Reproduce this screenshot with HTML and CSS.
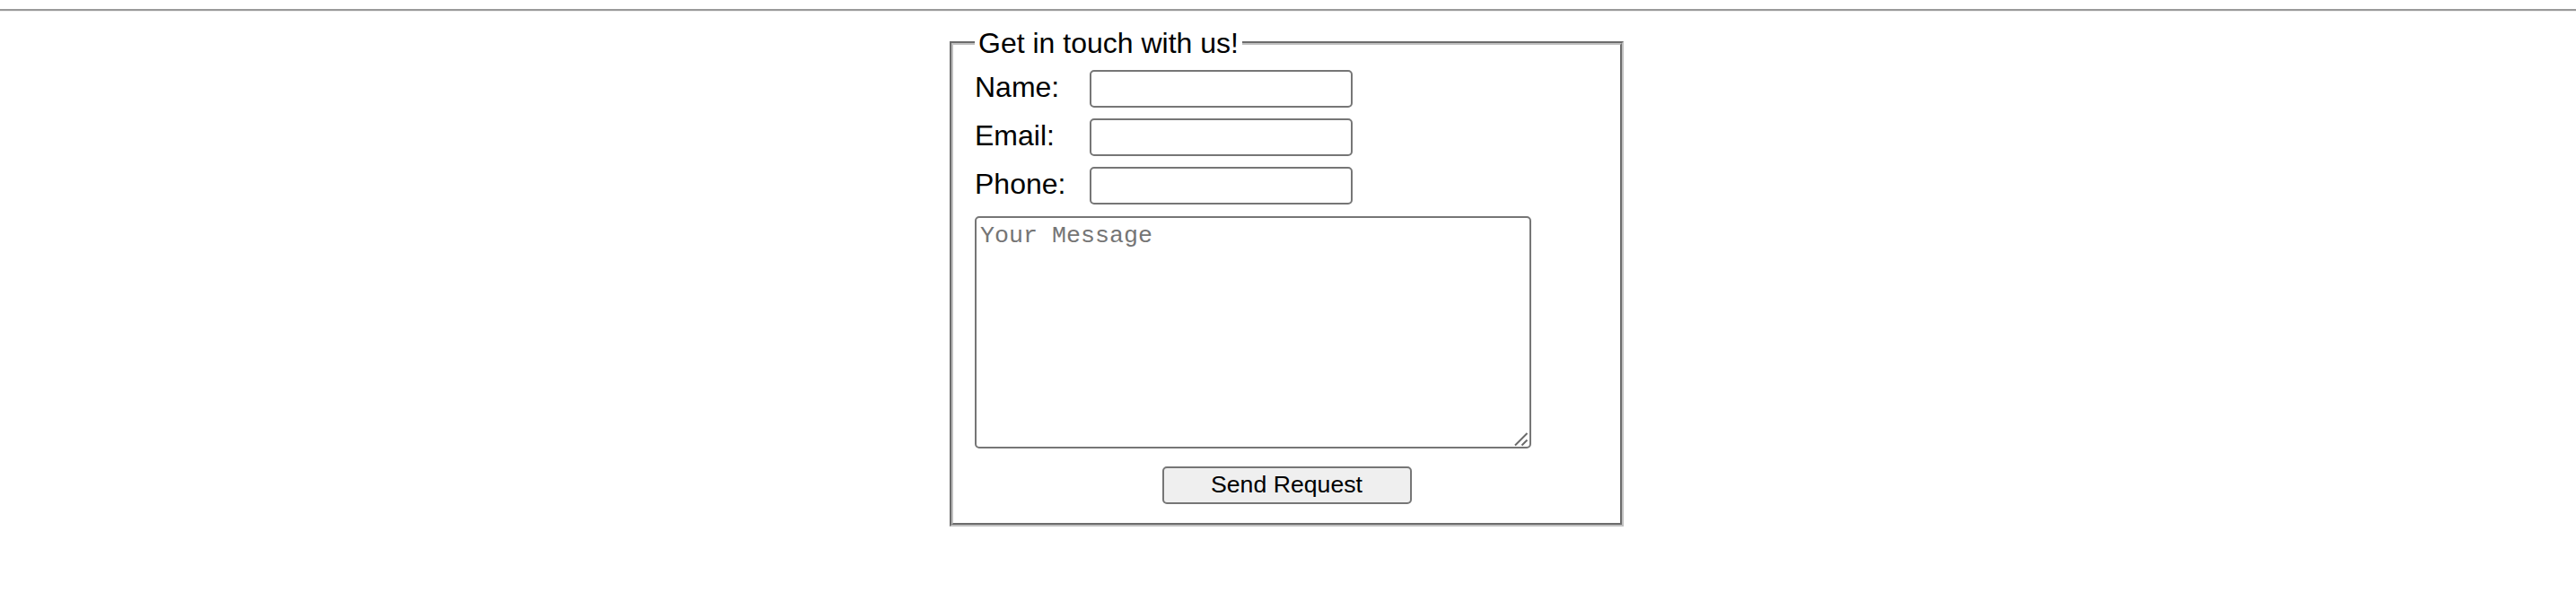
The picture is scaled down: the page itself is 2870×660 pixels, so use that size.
FILE: index.html
```html
<!DOCTYPE html>
<html lang="en">
<head>
<meta charset="utf-8">
<title>Contact</title>
<link rel="stylesheet" href="styles.css">
</head>
<body>
<div class="rule"></div>
<form class="contact">
  <fieldset class="box">
    <legend class="box-title">Get in touch with us!</legend>
    <div class="fields">
      <label class="label" for="name">Name:</label>
      <input class="field" id="name" type="text">
      <label class="label" for="email">Email:</label>
      <input class="field" id="email" type="text">
      <label class="label" for="phone">Phone:</label>
      <input class="field" id="phone" type="text">
    </div>
    <div class="message-wrap">
      <textarea class="message" placeholder="Your Message"></textarea>
      <svg class="grip" width="18" height="18" viewBox="0 0 18 18" aria-hidden="true">
        <line x1="2" y1="16.5" x2="15.5" y2="3" stroke="#6a6a6a" stroke-width="2"/>
        <line x1="9.5" y1="16.5" x2="15.5" y2="10.5" stroke="#6a6a6a" stroke-width="2"/>
      </svg>
    </div>
    <div class="actions">
      <button class="send" type="button">Send Request</button>
    </div>
  </fieldset>
</form>
</body>
</html>
```
FILE: styles.css
```css
html, body {
  margin: 0;
  padding: 0;
  background: #ffffff;
}

body {
  font-family: "Liberation Sans", Arial, sans-serif;
  color: #000000;
}

.rule {
  margin-top: 10px;
  height: 0;
  border-top: 2px solid #9a9a9a;
  border-bottom: 1px solid #eeeeee;
}

.contact {
  display: block;
  margin: 17px 0 0 calc(50% - 377px);
  width: 751px;
}

.box {
  box-sizing: border-box;
  width: 751px;
  margin: 0;
  padding: 11px 24px 21px;
  border: 4px groove #c0c0c0;
  font-size: 32px;
}

.box-title {
  padding: 0 4px;
  font-size: 32px;
  line-height: 36.8px;
}

.fields {
  display: grid;
  grid-template-columns: 128px 293px;
  grid-auto-rows: 42px;
  row-gap: 12px;
  align-items: center;
}

.label {
  font-size: 32px;
  line-height: 36px;
  padding-bottom: 4px;
}

.field {
  box-sizing: border-box;
  width: 293px;
  height: 42px;
  margin: 0;
  padding: 2px 4px;
  border: 2px solid #767676;
  border-radius: 5px;
  background: #ffffff;
  font-family: "Liberation Sans", Arial, sans-serif;
  font-size: 26.67px;
}

.message-wrap {
  position: relative;
  width: 620px;
  height: 259px;
  margin-top: 13px;
}

.message {
  display: block;
  box-sizing: border-box;
  width: 620px;
  height: 259px;
  margin: 0;
  padding: 5px 4px 4px;
  border: 2px solid #767676;
  border-radius: 5px;
  resize: none;
  font-family: "Liberation Mono", "Courier New", monospace;
  font-size: 26.67px;
  background: #ffffff;
}

.message::placeholder {
  color: #757575;
}

.grip {
  position: absolute;
  right: 2px;
  bottom: 2px;
}

.actions {
  display: flex;
  justify-content: center;
  margin-top: 20px;
}

.send {
  box-sizing: border-box;
  width: 278px;
  height: 42px;
  margin: 0;
  padding: 0 12px;
  border: 2px solid #767676;
  border-radius: 5px;
  background: #efefef;
  color: #000000;
  font-family: "Liberation Sans", Arial, sans-serif;
  font-size: 26.67px;
}
```
